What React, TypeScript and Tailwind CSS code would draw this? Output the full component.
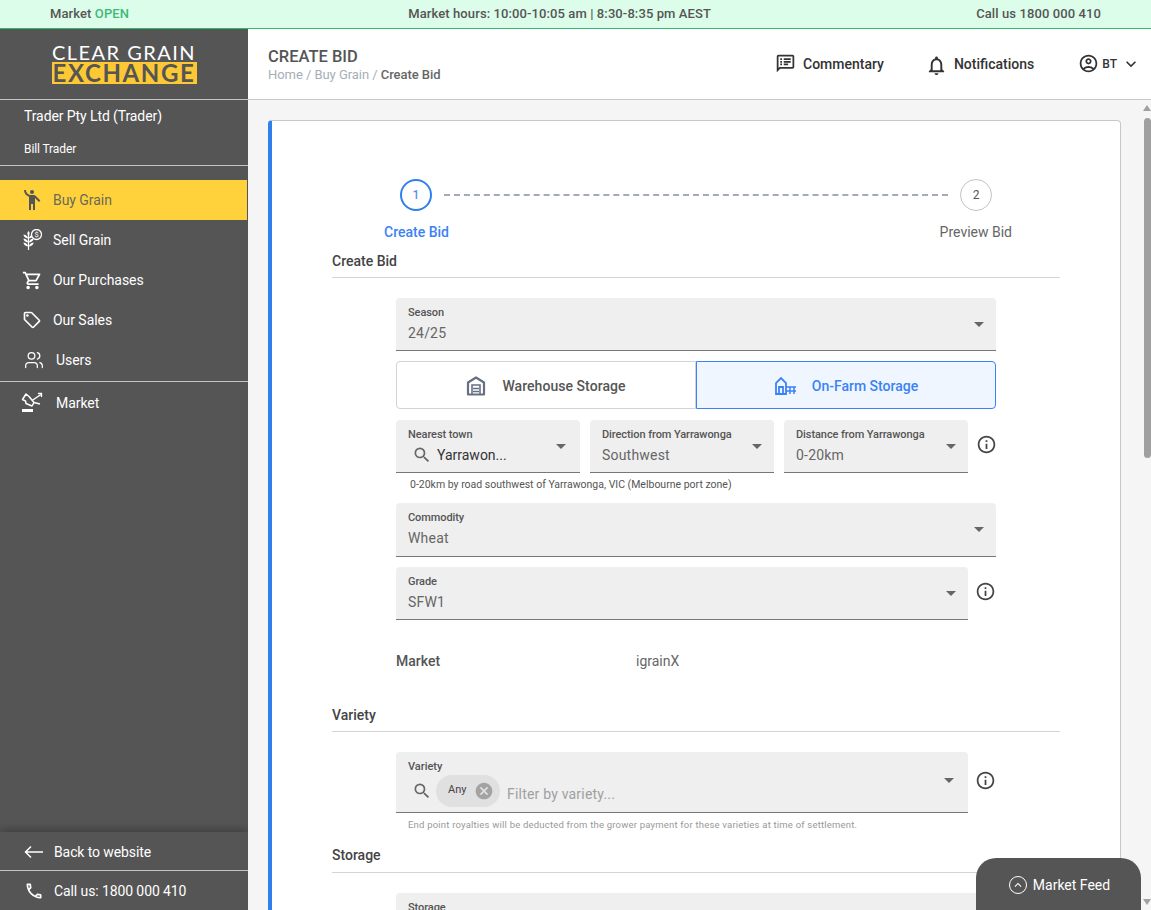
import type { ReactNode } from "react";
import { Users } from "lucide-react";
import {
  MdCancel,
  MdEmojiPeople,
  MdInfoOutline,
  MdKeyboardArrowDown,
  MdKeyboardArrowUp,
  MdOutlineAccountCircle,
  MdOutlineLocalOffer,
  MdOutlineNotifications,
  MdOutlinePhone,
  MdOutlineShoppingCart,
  MdOutlineSpeakerNotes,
  MdSearch,
} from "react-icons/md";

function SellGrainIcon() {
  return (
    <svg viewBox="0 0 20 22" className="h-[22px] w-[20px] shrink-0" fill="none" stroke="currentColor">
      <path d="M6.500 6v15" strokeWidth="1.200" />
      <g fill="currentColor" stroke="none">
        <path d="M6 9.500C3 9 1.500 7.500 1.500 5.500 4.500 6 6 7.500 6 9.500Z" />
        <path d="M6 13.500C3 13 1.500 11.500 1.500 9.500 4.500 10 6 11.500 6 13.500Z" />
        <path d="M6 17.500C3 17 1.500 15.500 1.500 13.500 4.500 14 6 15.500 6 17.500Z" />
        <path d="M7 9.500c3-.5 4.500-2 4.500-4C8.500 6 7 7.500 7 9.500Z" />
        <path d="M7 13.500c3-.5 4.500-2 4.500-4C8.500 10 7 11.500 7 13.500Z" />
        <path d="M7 17.500c3-.5 4.500-2 4.500-4C8.500 14 7 15.500 7 17.500Z" />
        <path d="M6.500 7C5 5.500 5 3.500 6.500 2 8 3.500 8 5.500 6.500 7Z" />
      </g>
      <circle cx="14.500" cy="5.500" r="5" fill="#555555" strokeWidth="1.300" />
      <text x="14.500" y="8.300" textAnchor="middle" fontSize="7.500" fill="currentColor" stroke="none">$</text>
    </svg>
  );
}

function MarketIcon() {
  return (
    <svg viewBox="0 0 22 22" className="h-[22px] w-[22px] shrink-0" fill="none" stroke="currentColor" strokeWidth="1.500">
      <path d="M5 2 1.500 7.500l3 1.500.5 2.500 6 2.500 2-3.500L8 4.500Z" strokeLinejoin="round" />
      <path d="M11 8.500 20 2.500" />
      <path d="M17 1.500h3.500V5" strokeWidth="1.300" />
      <path d="M13 10.500l6 1.500" strokeWidth="1.300" />
      <rect x="1" y="17" width="11" height="3" fill="currentColor" stroke="none" />
    </svg>
  );
}

function BackIcon() {
  return (
    <svg viewBox="0 0 20 20" className="h-5 w-5 shrink-0" fill="none" stroke="currentColor" strokeWidth="1.500">
      <path d="M19 10H1.500M7 4.500 1.500 10 7 15.500" />
    </svg>
  );
}

function WarehouseIcon() {
  return (
    <svg viewBox="0 0 20 20" className="h-[20px] w-[20px]" fill="none" stroke="currentColor" strokeWidth="2.200">
      <path d="M2 18.500V6.500L10 1.500l8 5v12Z" strokeLinejoin="round" />
      <path d="M6 18.500V9h8v9.500" strokeWidth="1.600" />
      <path d="M7 12.500h6M7 15.500h6" strokeWidth="1.400" />
    </svg>
  );
}

function FarmIcon() {
  return (
    <svg viewBox="0 0 24 20" className="h-[20px] w-[24px]" fill="none" stroke="currentColor" strokeWidth="1.800">
      <path d="M2 18V7l5-5 5 5v11Z" />
      <path d="M5 18v-7h4v7" />
      <path d="M12 11h10M12 15h10M16 11v7M20 11v7" strokeWidth="1.500" />
    </svg>
  );
}

function NavItem({ icon, label, active, textClass }: { icon: ReactNode; label: string; active?: boolean; textClass: string }) {
  return (
    <div className={`flex h-10 items-center pl-[22px] text-sm tracking-[-0.05px] ${active ? "mr-px bg-[#ffd23c] text-[#6a6a5a]" : "text-white"}`}>
      <span className={`flex w-5 items-center justify-center ${active ? "text-[#555555]" : "text-white"}`}>{icon}</span>
      <span className={textClass}>{label}</span>
    </div>
  );
}

function Arrow() {
  return <span className="h-0 w-0 border-x-[5px] border-t-[5px] border-x-transparent border-t-[#666666]" />;
}

function Field({ label, children, className }: { label: string; children: ReactNode; className: string }) {
  return (
    <div className={`flex shrink-0 items-center justify-between rounded-t border-b border-[#777777] bg-[#efefef] pl-3 ${className}`}>
      <div className="min-w-0 flex-1">
        <div className="mb-[4px] mt-[1px] text-[11px] font-medium leading-[13px] tracking-[-0.08px] text-[#555555]">{label}</div>
        {children}
      </div>
      <div className="ml-2 mt-[1px] flex">
        <Arrow />
      </div>
    </div>
  );
}

function FieldValue({ text }: { text: string }) {
  return <div className="h-5 text-sm leading-5 tracking-[0.2px] text-[#666666]">{text}</div>;
}

function Info() {
  return <MdInfoOutline className="h-[21px] w-[21px] text-[#444444]" />;
}

function Section({ title, className }: { title: string; className: string }) {
  return <div className={`border-b border-[#d4d4d4] text-sm font-medium leading-5 text-[#444444] ${className}`}>{title}</div>;
}

export default function App() {
  return (
    <div className="relative flex h-screen flex-col overflow-hidden bg-white font-[Roboto,sans-serif]">
      {/* market status strip */}
      <div className="flex h-[29px] shrink-0 items-center justify-between border-b border-[#3cb371] bg-[#dcfde9] pl-[50px] pr-[50px] text-[13px] font-medium tracking-[0.1px] text-[#555555]">
        <span>
          Market <span className="text-[#3fb97a]">OPEN</span>
        </span>
        <span className="ml-[14px]">Market hours: 10:00-10:05 am | 8:30-8:35 pm AEST</span>
        <span>Call us 1800 000 410</span>
      </div>

      <div className="flex min-h-0 flex-1">
        {/* sidebar */}
        <aside className="flex w-[248px] shrink-0 flex-col bg-[#555555] text-white">
          <div className="flex h-[71px] shrink-0 flex-col items-center border-b border-[#c4c4c4] pt-[14px]">
            <div className="w-[145px] whitespace-nowrap text-center font-['Lato',sans-serif] text-[20px] leading-[18px] tracking-[1.45px] text-white">CLEAR GRAIN</div>
            <div className="mt-[1px] h-[22px] w-[145px] whitespace-nowrap bg-[#fcc934] text-center font-['Lato',sans-serif] text-[24px] font-bold leading-[22px] tracking-[1.6px] text-[#555555]">EXCHANGE</div>
          </div>
          <div className="flex h-[66px] shrink-0 flex-col border-b border-[#c4c4c4] pl-6 tracking-[-0.1px]">
            <div className="pt-[6px] text-sm leading-5">Trader Pty Ltd (Trader)</div>
            <div className="pt-[15px] text-xs leading-4">Bill Trader</div>
          </div>
          <nav className="mt-[14px]">
            <NavItem active label="Buy Grain" textClass="ml-[11px]" icon={<MdEmojiPeople className="h-6 w-6 shrink-0" />} />
            <NavItem label="Sell Grain" textClass="ml-[11px]" icon={<SellGrainIcon />} />
            <NavItem label="Our Purchases" textClass="ml-[11px]" icon={<MdOutlineShoppingCart className="h-[21px] w-[21px] shrink-0" />} />
            <NavItem label="Our Sales" textClass="ml-[11px]" icon={<MdOutlineLocalOffer className="h-5 w-5 shrink-0" />} />
            <div className="border-b border-[#c4c4c4] pb-px">
              <NavItem label="Users" textClass="ml-[14px]" icon={<Users className="ml-[3px] h-[20px] w-[20px] shrink-0" strokeWidth={1.500} />} />
            </div>
            <div className="mt-px">
              <NavItem label="Market" textClass="ml-[14px]" icon={<MarketIcon />} />
            </div>
          </nav>
          <div className="mt-auto tracking-[-0.1px] shadow-[0_-3px_8px_rgba(0,0,0,0.25)]">
            <div className="flex h-[39px] items-center border-b border-[#c4c4c4] pl-6 pt-[2px] text-sm">
              <BackIcon />
              <span className="ml-[10px]">Back to website</span>
            </div>
            <div className="flex h-[39px] items-center pl-6 text-sm">
              <MdOutlinePhone className="h-[20px] w-[20px]" />
              <span className="ml-[10px]">Call us: 1800 000 410</span>
            </div>
          </div>
        </aside>

        <div className="flex min-w-0 flex-1 flex-col">
          {/* header */}
          <header className="flex h-[71px] shrink-0 items-center justify-between border-b border-[#c8c8c8] pl-5 pr-[10px]">
            <div className="mt-[3px]">
              <div className="text-[16.500px] font-medium leading-[18px] text-[#555555]">CREATE BID</div>
              <div className="text-[13px] leading-[17px] tracking-[-0.05px] text-[#a5aeb8]">
                Home / Buy Grain / <span className="font-medium text-[#666666]">Create Bid</span>
              </div>
            </div>
            <div className="-mt-[1px] flex items-center text-[#333333]">
              <MdOutlineSpeakerNotes className="h-[21px] w-[21px]" />
              <span className="ml-[7px] text-sm font-medium">Commentary</span>
              <MdOutlineNotifications className="ml-[41px] mt-[3px] h-[23px] w-[23px]" />
              <span className="ml-[6px] text-sm font-medium">Notifications</span>
              <MdOutlineAccountCircle className="ml-[44px] h-[21px] w-[21px]" />
              <span className="ml-[3px] text-xs font-medium">BT</span>
              <MdKeyboardArrowDown className="ml-[4px] h-[20px] w-[20px]" />
            </div>
          </header>

          <div className="flex min-h-0 flex-1 bg-[#f5f5f5]">
            <main className="min-w-0 flex-1 overflow-hidden pl-5 pr-[22px] pt-5">
              <div className="rounded border border-l-4 border-[#c8c8c8] border-l-[#2f80ed] bg-white pb-10 pl-[60px] pr-[60px]">
                {/* stepper */}
                <div className="flex h-[101px] items-start justify-between px-[68px] pt-[58px]">
                  <div className="flex h-8 w-8 items-center justify-center rounded-full border-2 border-[#2f80ed] text-xs font-medium text-[#5a8fe8]">1</div>
                  <div className="mx-3 mt-[15px] flex-1 border-t-2 border-dashed border-[#a3abb6]" />
                  <div className="flex h-8 w-8 items-center justify-center rounded-full border border-[#c4c4c4] text-xs text-[#555555]">2</div>
                </div>
                <div className="flex justify-between pl-[52px] pr-[48px] text-sm leading-5">
                  <span className="font-medium text-[#3b82f6]">Create Bid</span>
                  <span className="text-[#666666]">Preview Bid</span>
                </div>
                <Section title="Create Bid" className="mt-[9px] h-[27px]" />

                <div className="ml-16 mt-5 w-[600px]">
                  <Field label="Season" className="h-[53px] pr-3">
                    <FieldValue text="24/25" />
                  </Field>

                  <div className="mt-[10px] flex h-12 text-sm font-medium">
                    <div className="flex w-[300px] items-center justify-center rounded-l border border-[#cfd3da] pt-px text-[#555555]">
                      <span className="text-[#667085]"><WarehouseIcon /></span>
                      <span className="ml-[16px] tracking-[0.05px]">Warehouse Storage</span>
                    </div>
                    <div className="flex w-[300px] items-center justify-center rounded-r border border-[#3b82f6] bg-[#eff6ff] pt-px text-[#3b82f6]">
                      <FarmIcon />
                      <span className="ml-[14px]">On-Farm Storage</span>
                    </div>
                  </div>

                  <div className="mt-[11px] flex items-start gap-[10px]">
                    <Field label="Nearest town" className="h-[53px] w-[184px] pr-[14px]">
                      <div className="flex h-5 items-center pl-1 text-sm leading-5 text-[#333333]">
                        <MdSearch className="h-[20px] w-[20px] text-[#666666]" />
                        <span className="ml-[5px]">Yarrawon...</span>
                      </div>
                    </Field>
                    <Field label="Direction from Yarrawonga" className="h-[53px] w-[184px] pr-3">
                      <FieldValue text="Southwest" />
                    </Field>
                    <Field label="Distance from Yarrawonga" className="h-[53px] w-[184px] pr-3">
                      <FieldValue text="0-20km" />
                    </Field>
                    <div className="ml-[-2px] mt-[14px]"><Info /></div>
                  </div>
                  <div className="mt-[5px] pl-[14px] text-[10.500px] leading-[14px] text-[#555555]">
                    0-20km by road southwest of Yarrawonga, VIC (Melbourne port zone)
                  </div>

                  <Field label="Commodity" className="mt-[11px] h-[54px] pb-px pr-3">
                    <FieldValue text="Wheat" />
                  </Field>

                  <div className="mt-[10px] flex items-start">
                    <Field label="Grade" className="h-[53px] w-[572px] pr-3">
                      <FieldValue text="SFW1" />
                    </Field>
                    <div className="ml-[7px] mt-[14px]"><Info /></div>
                  </div>

                  <div className="mt-[31px] flex text-sm leading-5">
                    <span className="w-[240px] font-medium text-[#555555]">Market</span>
                    <span className="text-[#666666]">igrainX</span>
                  </div>
                </div>

                <Section title="Variety" className="mt-[34px] h-[27px]" />

                <div className="ml-16 mt-5 w-[600px]">
                  <div className="flex items-start">
                    <div className="flex h-[61px] w-[572px] items-center justify-between rounded-t border-b border-[#777777] bg-[#efefef] pl-3 pr-[14px]">
                      <div className="mt-[2px]">
                        <div className="text-[11px] font-medium leading-[13px] text-[#555555]">Variety</div>
                        <div className="mt-[2px] flex items-center">
                          <MdSearch className="ml-[4px] h-[20px] w-[20px] text-[#666666]" />
                          <div className="ml-[4px] flex h-8 w-[64px] items-center justify-between rounded-full bg-[#e0e0e0] pl-3 pr-[6px] text-[11px] text-[#444444]">
                            <span>Any</span>
                            <MdCancel className="h-[20px] w-[20px] text-[#a3a3a3]" />
                          </div>
                          <span className="ml-[7px] mt-[7px] text-sm tracking-[0.2px] text-[#a0a0a0]">Filter by variety...</span>
                        </div>
                      </div>
                      <div className="-mt-[3px] flex"><Arrow /></div>
                    </div>
                    <div className="ml-[7px] mt-[18px]"><Info /></div>
                  </div>
                  <div className="mt-[5px] pl-3 text-[9.500px] leading-[13px] tracking-[0.2px] text-[#999999]">
                    End point royalties will be deducted from the grower payment for these varieties at time of settlement.
                  </div>
                </div>

                <Section title="Storage" className="mt-[14px] h-[28px]" />

                <div className="ml-16 mt-5 w-[600px]">
                  <Field label="Storage" className="h-[53px] pr-3">
                    <FieldValue text="" />
                  </Field>
                </div>
              </div>
            </main>

            {/* scrollbar */}
            <div className="flex w-2 shrink-0 flex-col items-center pt-[5px]">
              <span className="h-0 w-0 border-x-4 border-b-[6px] border-x-transparent border-b-[#a0a0a0]" />
              <div className="mt-[7px] h-[340px] w-[7px] rounded bg-[#a0a0a0]" />
            </div>
          </div>
        </div>
      </div>

      {/* overlaid feed tab and scrollbar arrow */}
      <div className="absolute bottom-0 right-[10px] flex h-[52px] w-[165px] items-center justify-center rounded-t-[20px] bg-[#555555] pl-[2px] pt-[2px] text-sm text-white">
        <span className="mr-[6px] flex h-[18px] w-[18px] items-center justify-center rounded-full border border-white">
          <MdKeyboardArrowUp className="h-[14px] w-[14px]" />
        </span>
        Market Feed
      </div>
      <span className="absolute bottom-[5px] right-0 h-0 w-0 border-x-4 border-t-[6px] border-x-transparent border-t-[#a0a0a0]" />
    </div>
  );
}
